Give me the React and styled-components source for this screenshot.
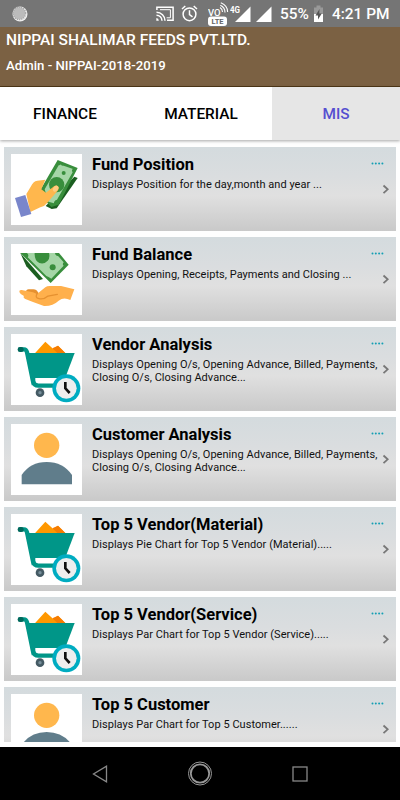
import React from 'react'
import styled, { createGlobalStyle } from 'styled-components'

const GlobalStyle = createGlobalStyle`
    * { box-sizing: border-box; }
    body {
        margin: 0;
        background: #fff;
        font-family: Roboto, "Liberation Sans", sans-serif;
    }
`
const Screen = styled.div`
    width: 400px;
    height: 800px;
    display: flex;
    flex-direction: column;
    overflow: hidden;
    background: #fefefe;
`
const StatusBar = styled.div`
    height: 27px;
    flex: none;
    display: flex;
    align-items: center;
    padding: 0 0 0 12px;
    background: #757575;
    color: #fff;
`
const StatusIcon = styled.svg`
    flex: none;
    display: block;
    margin-left: ${({ $left }) => $left || 0}px;
`
const StatusText = styled.span`
    flex: none;
    font-size: 15.4px;
    font-weight: 500;
    line-height: 28px;
    white-space: nowrap;
    width: ${({ $width }) => $width}px;
    margin-left: ${({ $left }) => $left}px;
`
const Header = styled.header`
    height: 60px;
    flex: none;
    padding: 4px 6px 0;
    background: #7b6143;
    border-bottom: 1px solid #4f3818;
    color: #fff;
`
const Company = styled.h1`
    margin: 0;
    font-size: 15.5px;
    line-height: 18px;
    font-weight: 500;
    white-space: nowrap;
`
const Account = styled.p`
    margin: 8px 0 0;
    font-size: 13.2px;
    line-height: 18px;
    font-weight: 500;
`
const Tabs = styled.nav`
    height: 53px;
    flex: none;
    display: grid;
    grid-template-columns: 130px 142px 128px;
    background: #fff;
    box-shadow: 0 1px 3px rgba(0, 0, 0, 0.35);
    z-index: 1;
`
const Tab = styled.button`
    border: none;
    padding: 1px 0 0;
    font-family: inherit;
    font-size: 15.4px;
    font-weight: 500;
    color: ${({ $active }) => ($active ? '#554fd0' : '#000')};
    background: ${({ $active }) => ($active ? '#e6e6e6' : '#fff')};
`
const List = styled.main`
    height: 602px;
    flex: none;
    margin: 0 4px;
    padding-top: 7px;
    overflow: hidden;
    display: flex;
    flex-direction: column;
    gap: 6px;
`
const Card = styled.article`
    height: 84px;
    flex: none;
    display: flex;
    padding: 7px 0 0 7px;
    background: linear-gradient(#d4dbde 0%, #dadddf 35%, #e0e0e0 58%, #c9c9c9 100%);
`
const Thumb = styled.div`
    width: 71px;
    height: 71px;
    flex: none;
    background: #fff;
`
const Info = styled.div`
    width: 279px;
    flex: none;
    margin-left: 10px;
    padding-top: 1px;
`
const Title = styled.h2`
    margin: 0;
    font-size: 16.5px;
    line-height: 20px;
    font-weight: 700;
    color: #000;
    white-space: nowrap;
`
const Description = styled.p`
    margin: 3px 0 0;
    font-size: 11px;
    line-height: 13px;
    color: #111;
    white-space: pre;
    letter-spacing: 0.04px;
`
const Side = styled.div`
    flex: 1;
    display: flex;
    flex-direction: column;
    align-items: flex-end;
    padding: 8px 7px 0 0;
`
const Dots = styled.svg`
    display: block;
    flex: none;
    margin-right: 5px;
`
const Chevron = styled.svg`
    display: block;
    margin-top: 19px;
`
const NavBar = styled.footer`
    height: 53px;
    margin-top: 5px;
    flex: none;
    display: flex;
    justify-content: space-between;
    align-items: center;
    padding: 0 88px;
    background: #000;
`

// icons are drawn on a 213 grid, three units for each pixel of the thumb
function Drawing({ children }) {
    return <svg width="71" height="71" viewBox="0 0 213 213">{children}</svg>
}

function PaymentIcon() {
    return (
        <Drawing>
            <path d="M190 68L200 72L137 163L122 165L104 156Z" fill="#1b5e20" />
            <path d="M140 18L200 42L143 152L121 159L80 118L90 104Z" fill="#388e3c" />
            <path d="M149 31Q150 34 143 34L101 106L112 143L129 148Q128 140 138 137L185 55Q180 48 186 45L158 35Q153 37 149 31Z" fill="#a5d6a7" />
            <circle cx="137" cy="92" r="23" fill="#388e3c" />
            <circle cx="158" cy="57" r="6" fill="#388e3c" />
            <path d="M46 120L60 97Q66 82 79 80L103 77L91 106L105 116L130 96Q139 92 143 100Q144 106 140 110L109 146Q101 157 88 160L58 174Z" fill="#ffb74d" />
            <ellipse cx="134" cy="104" rx="7" ry="10" transform="rotate(35 134 104)" fill="#ffcc80" />
            <path d="M12 132L43 123L61 180L30 189Z" fill="#7986cb" />
        </Drawing>
    )
}

function BalanceIcon() {
    return (
        <Drawing>
            <path d="M28 27L96 105L84 109L46 67Z" fill="#1b5e20" />
            <path d="M28 27H144L173 62L119 117Z" fill="#388e3c" />
            <path d="M48 27H132Q132 35 142 37L158 55Q153 62 158 65L121 104Q112 98 106 96L50 40Q55 33 48 27Z" fill="#a5d6a7" />
            <path d="M71 27H114Q118 41 110 50Q99 62 85 57Q70 50 71 27Z" fill="#388e3c" />
            <circle cx="125" cy="70" r="9" fill="#388e3c" />
            <path d="M45 144Q45 136 53 136H67Q77 136 81 145L91 157L66 157Z" fill="#e69130" />
            <path d="M25 144Q24 137 32 138L66 145L78 150L103 130Q108 126 116 126H150L190 136L178 168Q158 158 143 170Q125 187 99 186L66 174L43 165Q35 161 39 156Q27 151 25 144Z" fill="#ffb04c" />
            <path d="M79 148Q70 161 84 164Q99 167 111 156L139 151" fill="none" stroke="#e69130" strokeWidth="4" strokeLinecap="round" />
        </Drawing>
    )
}

function CartIcon() {
    return (
        <Drawing>
            <path d="M69 61L103 23L126 44L141 35L163 57Z" fill="#ff9800" />
            <path d="M124 43L141 35L163 57H139Z" fill="#f57c00" />
            <path d="M27 46H39Q46 46 48 55L66 142Q69 155 82 155H137" fill="none" stroke="#009688" strokeWidth="13" strokeLinecap="round" />
            <path d="M45 57H191L165 125Q162 132 153 132H73Q60 132 57 119Z" fill="#009688" />
            <path d="M57 112L62 154H73V116Z" fill="#009688" />
            <rect x="20" y="39" width="18" height="15" rx="7" fill="#00695c" />
            <circle cx="87" cy="176" r="13" fill="#455a64" />
            <circle cx="87" cy="176" r="5" fill="#78909c" />
            <circle cx="166" cy="163" r="42" fill="#00acc1" />
            <circle cx="166" cy="163" r="31" fill="#eee" />
            <path d="M163 144V163L176 177" fill="none" stroke="#111" strokeWidth="8" />
        </Drawing>
    )
}

function PersonIcon() {
    return (
        <Drawing>
            <circle cx="107" cy="64" r="38" fill="#ffb74d" />
            <path d="M32 181V153Q58 114 107 114T183 153V181Z" fill="#607d8b" />
        </Drawing>
    )
}

const icons = { payment: PaymentIcon, balance: BalanceIcon, cart: CartIcon, person: PersonIcon }

const reports = [
    { icon: 'payment', title: 'Fund Position', text: 'Displays Position for the day,month and year ...' },
    { icon: 'balance', title: 'Fund Balance', text: 'Displays Opening, Receipts, Payments and Closing ...' },
    { icon: 'cart', title: 'Vendor Analysis', text: 'Displays Opening O/s, Opening Advance, Billed, Payments,\nClosing O/s, Closing Advance...' },
    { icon: 'person', title: 'Customer Analysis', text: 'Displays Opening O/s, Opening Advance, Billed, Payments,\nClosing O/s, Closing Advance...' },
    { icon: 'cart', title: 'Top 5 Vendor(Material)', text: 'Displays Pie Chart for Top 5 Vendor (Material).....' },
    { icon: 'cart', title: 'Top 5 Vendor(Service)', text: 'Displays Par Chart for Top 5 Vendor (Service).....' },
    { icon: 'person', title: 'Top 5 Customer', text: 'Displays Par Chart for Top 5 Customer......' },
]

function Report({ report }) {
    const Icon = icons[report.icon]
    return (
        <Card>
            <Thumb><Icon /></Thumb>
            <Info>
                <Title>{report.title}</Title>
                <Description>{report.text}</Description>
            </Info>
            <Side>
                <Dots width="13" height="3" viewBox="0 0 13 3" fill="#159fb4">
                    <circle cx="1.5" cy="1.5" r="1" />
                    <circle cx="4.8" cy="1.5" r="1" />
                    <circle cx="8.1" cy="1.5" r="1" />
                    <circle cx="11.4" cy="1.5" r="1" />
                </Dots>
                <Chevron width="9" height="11" viewBox="0 0 9 11">
                    <path d="M3.5 1.5L7.7 5.3L3.5 9.1" fill="none" stroke="#777" strokeWidth="1.8" />
                </Chevron>
            </Side>
        </Card>
    )
}

function Status() {
    return (
        <StatusBar>
            <StatusIcon width="16" height="16" viewBox="0 0 16 16">
                <circle cx="8" cy="8" r="7.5" fill="#eee" />
                <circle cx="7.3" cy="7.3" r="6.3" fill="#bbb" />
                <circle cx="7.3" cy="7.3" r="6.3" fill="none" stroke="#a5a5a5" strokeWidth="1.4" strokeDasharray="1 1.2" />
            </StatusIcon>
            <StatusIcon $left={128} width="18" height="16" viewBox="0 0 18 16" fill="none" stroke="#fff" strokeWidth="1.5">
                <path d="M.9 4V1.2H17.1V14.2H11" />
                <path d="M4 3.7H14.4V11.8H10.6" strokeWidth="1" />
                <path d="M.5 6.2A8.5 8.5 0 0 1 9 14.7M.5 9.2A5.5 5.5 0 0 1 6 14.7" />
                <path d="M.3 12.1A2.6 2.6 0 0 1 2.8 14.7H.3Z" fill="#fff" stroke="none" />
            </StatusIcon>
            <StatusIcon $left={7} width="17" height="17" viewBox="0 0 17 17" fill="none" stroke="#fff" strokeWidth="1.5">
                <circle cx="8.5" cy="9.3" r="6.4" />
                <path d="M1 4L4.3 1M16 4L12.7 1M8.5 5.3V9.6L11.5 11.8" />
            </StatusIcon>
            <StatusIcon $left={10} width="22" height="26" viewBox="0 0 22 26">
                <text x="0" y="14.5" fontSize="9.5" fontWeight="500" fill="#fff">VO</text>
                <path d="M12 6.5Q14.5 8 14.5 11M12.3 4.2Q17 6.3 17 11.5M12.8 1.8Q19.6 4.5 19.6 11" fill="none" stroke="#fff" strokeWidth="1.1" />
                <rect x="0" y="15.5" width="19" height="9.5" rx="3" fill="#fff" />
                <text x="9.5" y="23" fontSize="7.5" fontWeight="700" fill="#666" textAnchor="middle">LTE</text>
            </StatusIcon>
            <StatusIcon $left={0} width="43" height="18" viewBox="0 0 43 18">
                <text x="0" y="8" fontSize="8.5" fontWeight="700" fill="#fff" textLength="10" lengthAdjust="spacingAndGlyphs">4G</text>
                <path d="M20.5 1.5V17H5Z" fill="#fff" />
                <path d="M41.5 1.5V17H26Z" fill="#fff" />
            </StatusIcon>
            <StatusText $left={7} $width={33}>55%</StatusText>
            <StatusIcon width="11" height="18" viewBox="0 0 11 18">
                <path d="M3.5 .5H7.5V2.5H10V17H1V2.5H3.5Z" fill="#999" />
                <path d="M1 9H10V17H1Z" fill="#fff" />
                <path d="M6.5 4L2.5 10.5H5V14.5L8.8 8.5H6.3Z" fill="#555" />
            </StatusIcon>
            <StatusText $left={8} $width={60}>4:21 PM</StatusText>
        </StatusBar>
    )
}

export default function App() {
    return (
        <Screen>
            <GlobalStyle />
            <Status />
            <Header>
                <Company>NIPPAI SHALIMAR FEEDS PVT.LTD.</Company>
                <Account>Admin - NIPPAI-2018-2019</Account>
            </Header>
            <Tabs>
                <Tab>FINANCE</Tab>
                <Tab>MATERIAL</Tab>
                <Tab $active>MIS</Tab>
            </Tabs>
            <List>
                {reports.map(report => (
                    <Report key={report.title} report={report} />
                ))}
            </List>
            <NavBar>
                <svg width="24" height="24" viewBox="0 0 24 24" fill="none" stroke="#888" strokeWidth="1.3">
                    <path d="M18.5 4.2V19.8L5.5 12Z" />
                </svg>
                <svg width="26" height="26" viewBox="0 0 26 26" fill="none" stroke="#999">
                    <circle cx="13" cy="12.5" r="11.5" />
                    <circle cx="13" cy="12.5" r="9.2" strokeWidth="1.8" />
                </svg>
                <svg width="24" height="24" viewBox="0 0 24 24" fill="none" stroke="#888" strokeWidth="1.3">
                    <rect x="5" y="5" width="14" height="14" />
                </svg>
            </NavBar>
        </Screen>
    )
}
